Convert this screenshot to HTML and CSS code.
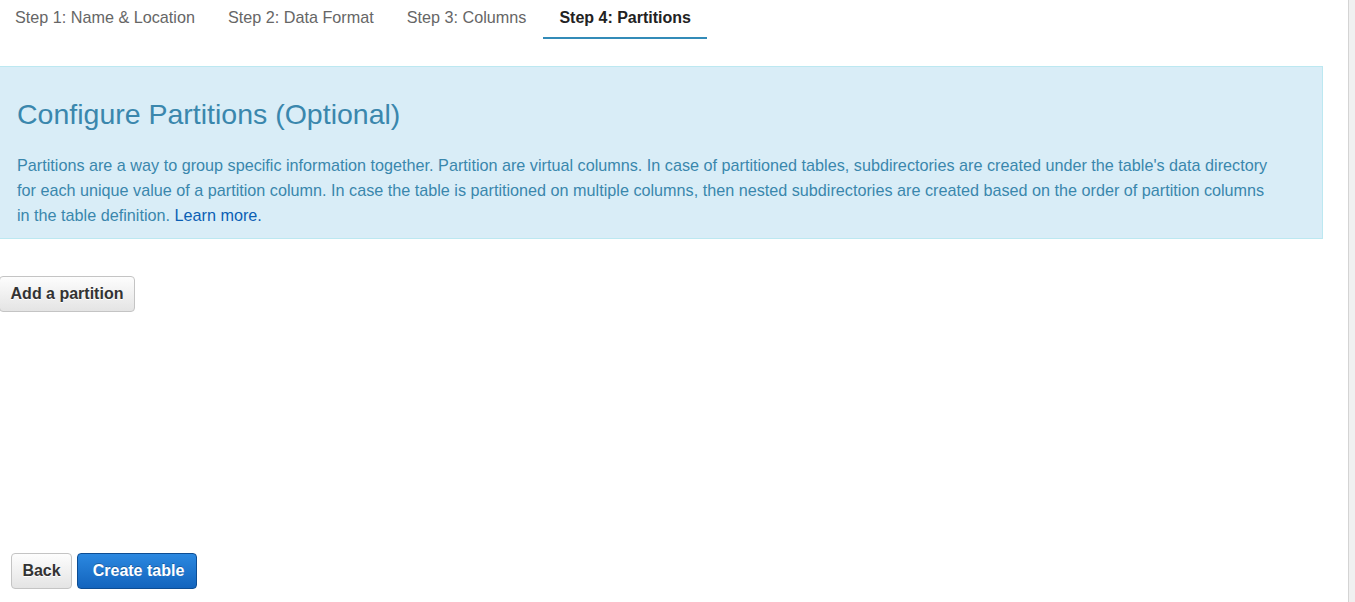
FILE: index.html
```html
<!DOCTYPE html>
<html>
<head>
<meta charset="utf-8">
<link rel="stylesheet" href="styles.css">
</head>
<body>
<div class="page">
  <main class="content">
    <nav class="tabs">
      <a class="tab">Step 1: Name &amp; Location</a>
      <a class="tab">Step 2: Data Format</a>
      <a class="tab">Step 3: Columns</a>
      <a class="tab active">Step 4: Partitions</a>
    </nav>
    <section class="alert">
      <h2 class="alert-title">Configure Partitions (Optional)</h2>
      <p class="alert-text">Partitions are a way to group specific information together. Partition are virtual columns. In case of partitioned tables, subdirectories are created under the table's data directory for each unique value of a partition column. In case the table is partitioned on multiple columns, then nested subdirectories are created based on the order of partition columns in the table definition. <a class="link">Learn more.</a></p>
    </section>
    <div class="add-row">
      <button class="btn btn-add">Add a partition</button>
    </div>
    <div class="spacer"></div>
    <footer class="actions">
      <button class="btn btn-back">Back</button>
      <button class="btn btn-primary">Create table</button>
    </footer>
  </main>
  <aside class="rail"></aside>
</div>
</body>
</html>
```
FILE: styles.css
```css
* { box-sizing: border-box; }
html, body { margin: 0; padding: 0; height: 100%; }
body {
  font-family: "Liberation Sans", Arial, sans-serif;
  background: #fff;
  color: #333;
}
.page {
  display: flex;
  height: 602px;
  overflow: hidden;
}
.content {
  width: 1348px;
  display: flex;
  flex-direction: column;
}
.rail {
  flex: 1;
  border-left: 1px solid #d4d4d4;
  background: #f0f0f0;
}
.tabs {
  display: flex;
  gap: 1px;
  height: 39px;
  margin-left: -1px;
}
.tab {
  display: block;
  padding: 8px 16px 0 16px;
  font-size: 16.2px;
  line-height: 19px;
  color: #666;
  height: 39px;
  white-space: nowrap;
  border-bottom: 2px solid transparent;
}
.tab.active {
  color: #222;
  font-size: 16px;
  font-weight: bold;
  border-bottom-color: #338bb8;
}
.alert {
  margin-top: 27px;
  width: 1323px;
  background: #d9edf7;
  border: 1px solid #bce8f1;
  border-left: none;
  padding: 30px 45px 10px 17px;
  color: #3a87ad;
}
.alert-title {
  margin: 0 0 22px 0;
  font-size: 28.5px;
  font-weight: normal;
  line-height: 34px;
}
.alert-text {
  margin: 0;
  font-size: 16.2px;
  line-height: 25px;
}
.link { color: #0b5fb4; }
.add-row {
  padding-top: 37px;
}
.btn {
  font-family: "Liberation Sans", Arial, sans-serif;
  font-size: 16px;
  font-weight: bold;
  color: #333;
  height: 36px;
  padding: 0 10px;
  white-space: nowrap;
  border: 1px solid #c4c4c4;
  border-radius: 4px;
  background: linear-gradient(#fdfdfd, #e4e4e4);
  text-shadow: 0 1px 0 #fff;
}
.btn-add { width: 136px; margin-left: -1px; }
.btn-back { width: 61px; padding: 0; }
.spacer { flex: 1; }
.actions {
  display: flex;
  gap: 5px;
  padding: 0 0 13px 11px;
}
.btn-primary {
  color: #fff;
  border-color: #0d4d93;
  background: linear-gradient(#2b88e0, #1364bd);
  text-shadow: 0 -1px 0 rgba(0,0,0,0.25);
  width: 120px;
  padding: 0 10px 0 13px;
}
```
